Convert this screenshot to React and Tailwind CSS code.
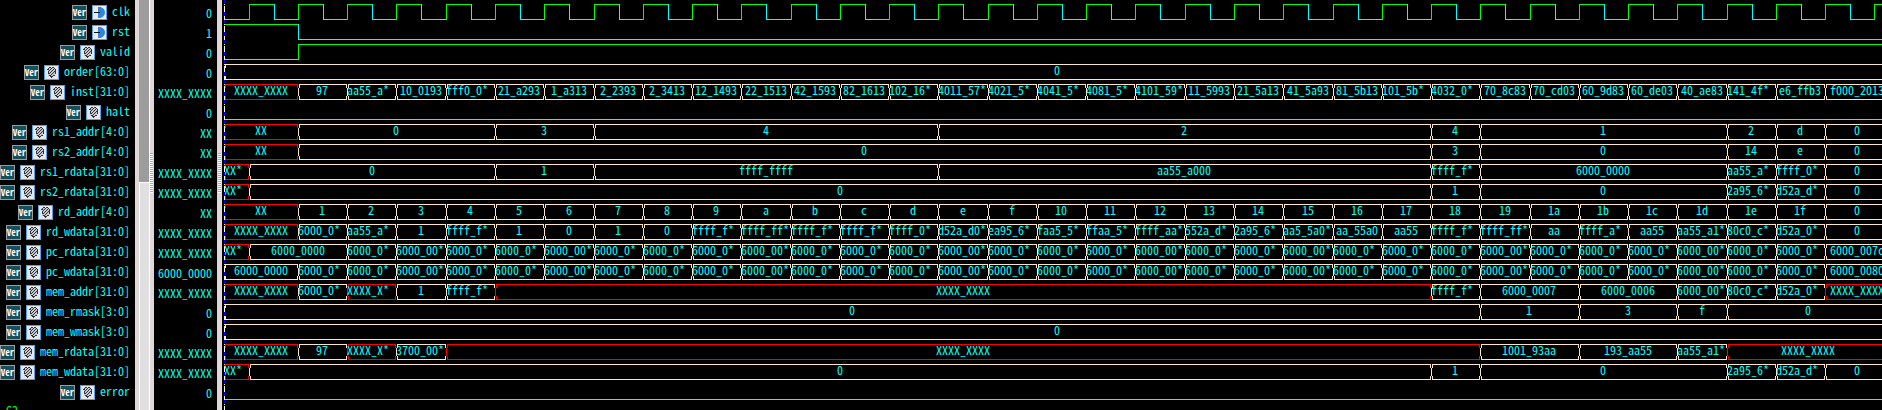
const CYAN = "#00ffff";
const GREEN = "#00ff00";
const RED = "#ff0000";
const CREAM = "#ffe4c4";

const ORIGIN = 225;
const START = 224;
const HALF = 249;
const END = 1890;
const B = [
  298, 347, 396, 446, 495, 544, 594, 643, 692, 741, 791, 840, 889, 938, 988, 1037,
  1086, 1135, 1185, 1234, 1283, 1333, 1382, 1431, 1480, 1530, 1579, 1628, 1677, 1727, 1776, 1825,
];

const each = (texts, from = 0) => texts.map((t, i) => [B[from + i], t]);
const pc = (from) =>
  B.slice(from, 31).map((b, i) => [b, B[from + i + 1] - b >= 50 ? "6000_00*" : "6000_0*"]);

const INST = "97 aa55_a* 10_0193 fff0_0* 21_a293 1_a313 2_2393 2_3413 12_1493 22_1513 42_1593 82_1613 102_16* 4011_57* 4021_5* 4041_5* 4081_5* 4101_59* 11_5993 21_5a13 41_5a93 81_5b13 101_5b* 4032_0* 70_8c83 70_cd03 60_9d83 60_de03 40_ae83 141_4f* e6_ffb3 f000_2013".split(" ");
const RD_ADDR = "1 2 3 4 5 6 7 8 9 a b c d e f 10 11 12 13 14 15 16 17 18 19 1a 1b 1c 1d 1e 1f 0".split(" ");
const RD_WDATA = "6000_0* aa55_a* 1 ffff_f* 1 0 1 0 ffff_f* ffff_ff* ffff_f* ffff_f* ffff_0* d52a_d0* ea95_6* faa5_5* ffaa_5* ffff_aa* 552a_d* 2a95_6* aa5_5a0* aa_55a0 aa55 ffff_f* ffff_ff* aa ffff_a* aa55 aa55_a1* 80c0_c* d52a_0* 0".split(" ");
const X = "XXXX_XXXX";

const SIGNALS = [
  { name: "clk", value: "0", input: true, clock: true },
  { name: "rst", value: "1", input: true, levels: [[START, 1], [B[0], 0]] },
  { name: "valid", value: "0", levels: [[START, 0], [B[0], 1]] },
  { name: "order[63:0]", value: "0", bus: [[START, "0"]] },
  { name: "inst[31:0]", value: X, bus: [[START, X], ...each(INST)] },
  { name: "halt", value: "0", levels: [[START, 0]] },
  { name: "rs1_addr[4:0]", value: "XX", bus: [[START, "XX"], [B[0], "0"], [B[4], "3"], [B[6], "4"], [B[13], "2"], [B[23], "4"], [B[24], "1"], [B[29], "2"], [B[30], "d"], [B[31], "0"]] },
  { name: "rs2_addr[4:0]", value: "XX", bus: [[START, "XX"], [B[0], "0"], [B[23], "3"], [B[24], "0"], [B[29], "14"], [B[30], "e"], [B[31], "0"]] },
  { name: "rs1_rdata[31:0]", value: X, bus: [[START, "XX*"], [HALF, "0"], [B[4], "1"], [B[6], "ffff_ffff"], [B[13], "aa55_a000"], [B[23], "ffff_f*"], [B[24], "6000_0000"], [B[29], "aa55_a*"], [B[30], "ffff_0*"], [B[31], "0"]] },
  { name: "rs2_rdata[31:0]", value: X, bus: [[START, "XX*"], [HALF, "0"], [B[23], "1"], [B[24], "0"], [B[29], "2a95_6*"], [B[30], "d52a_d*"], [B[31], "0"]] },
  { name: "rd_addr[4:0]", value: "XX", bus: [[START, "XX"], ...each(RD_ADDR)] },
  { name: "rd_wdata[31:0]", value: X, bus: [[START, X], ...each(RD_WDATA)] },
  { name: "pc_rdata[31:0]", value: X, bus: [[START, "XX*"], [HALF, "6000_0000"], ...pc(1), [B[31], "6000_007c"]] },
  { name: "pc_wdata[31:0]", value: "6000_0000", bus: [[START, "6000_0000"], ...pc(0), [B[31], "6000_0080"]] },
  { name: "mem_addr[31:0]", value: X, bus: [[START, X], ...each(["6000_0*", "XXXX_X*", "1", "ffff_f*", X]), [B[23], "ffff_f*"], [B[24], "6000_0007"], [B[26], "6000_0006"], [B[28], "6000_00*"], [B[29], "80c0_c*"], [B[30], "d52a_0*"], [B[31], X]] },
  { name: "mem_rmask[3:0]", value: "0", bus: [[START, "0"], [B[24], "1"], [B[26], "3"], [B[28], "f"], [B[29], "0"]] },
  { name: "mem_wmask[3:0]", value: "0", bus: [[START, "0"]] },
  { name: "mem_rdata[31:0]", value: X, bus: [[START, X], ...each(["97", "XXXX_X*", "3700_00*", X]), [B[24], "1001_93aa"], [B[26], "193_aa55"], [B[28], "aa55_a1*"], [B[29], X]] },
  { name: "mem_wdata[31:0]", value: X, bus: [[START, "XX*"], [HALF, "0"], [B[23], "1"], [B[24], "0"], [B[29], "2a95_6*"], [B[30], "d52a_d*"], [B[31], "0"]] },
  { name: "error", value: "0", levels: [[START, 0]] },
];

const clockLevels = () => {
  const rises = [HALF, ...B, 1874];
  const out = [[START, 0]];
  rises.forEach((r, i) => {
    out.push([r, 1]);
    out.push([Math.ceil((r + (rises[i + 1] ?? r + 49)) / 2), 0]);
  });
  return out;
};

function Levels({ levels }) {
  return levels.map(([x, level], i) => {
    const from = x - ORIGIN;
    const to = (levels[i + 1]?.[0] ?? END) - ORIGIN;
    const color = level ? GREEN : CYAN;
    return (
      <g key={x} fill={color}>
        {i > 0 && <rect x={from} y={4} width={1} height={16} />}
        <rect x={from} y={level ? 4 : 19} width={to - from + (level ? 0 : 1)} height={1} />
      </g>
    );
  });
}

function Bus({ cells }) {
  return cells.map(([x, text], i) => {
    const from = x - ORIGIN;
    const to = (cells[i + 1]?.[0] ?? END) - ORIGIN;
    const clipped = text.endsWith("*");
    return (
      <g key={x}>
        <path
          d={`M${from + 1} 4H${to}v4h-1v-3H${from + 2}v3h-1zM${from + 1} 20H${to}v-4h-1v3H${from + 2}v-3h-1zM${from} 8h1v8h-1z`}
          fill={text.startsWith("X") ? RED : CREAM}
        />
        <text
          x={clipped ? from : Math.floor((from + to) / 2)}
          y={15}
          textAnchor={clipped ? "start" : "middle"}
          fill={CYAN}
        >
          {text}
        </text>
      </g>
    );
  });
}

function Waveform({ signal }) {
  return (
    <svg className="block h-5 w-full" shapeRendering="crispEdges" role="img" aria-label={signal.name}>
      {signal.bus ? <Bus cells={signal.bus} /> : <Levels levels={signal.clock ? clockLevels() : signal.levels} />}
    </svg>
  );
}

function LanguageBadge() {
  return (
    <span className="flex h-[15px] w-[15px] shrink-0 items-center justify-center border border-[#9c9c9c] bg-[#17505c] text-[9px] leading-3 font-bold text-white">
      Ver
    </span>
  );
}

function InputIcon() {
  return (
    <svg className="h-[15px] w-[15px] shrink-0" viewBox="0 0 15 15" aria-hidden="true">
      <rect width="15" height="15" fill="#5aa0e6" />
      <rect x="1" y="1" width="13" height="13" fill="#e9edf3" />
      <path d="M6 2h2.500c3 1 4.500 3 4.500 5.500s-1.500 4.500-4.500 5.500H6z" fill="#2f86d8" />
      <path d="M2 7h6v1H2z" fill="#101010" />
    </svg>
  );
}

function RegisterIcon() {
  return (
    <svg className="h-[15px] w-[15px] shrink-0" viewBox="0 0 15 15" shapeRendering="crispEdges" aria-hidden="true">
      <rect width="15" height="15" fill="#5aa0e6" />
      <rect x="1" y="1" width="13" height="13" fill="#e4e7ec" />
      <path d="M4 3h7v8H4z" fill="#c6c9ce" />
      <path
        d="M5 2h2v1H5zM8 2h2v1H8zM4 3h1v2H4zM10 3h1v1h-1zM9 4h1v1H9zM8 5h1v1H8zM7 6h1v1H7zM6 7h1v1H6zM5 8h1v1H5zM7 3h1v1H7zM6 4h1v1H6zM5 5h1v1H5zM4 6h1v3H4zM10 6h1v1h-1zM9 7h1v1H9zM8 8h1v1H8zM7 9h1v1H7zM11 4h1v5h-1zM3 4h1v1H3zM5 10h2v1H5zM9 10h2v1H9zM6 11h3v1H6zM7 12h1v1H7z"
        fill="#303338"
      />
    </svg>
  );
}

function Grip() {
  return <div className="h-10 bg-[repeating-linear-gradient(#a8a8a8_0_1px,#ffffff_1px_2px)]" />;
}

export default function App() {
  return (
    <main className="flex h-screen w-full overflow-hidden bg-black font-['Noto_Sans_Mono_CJK_SC','DejaVu_Sans_Mono',monospace] text-[12px] leading-5 text-[#00ffff]">
      <section className="flex w-[135px] shrink-0 flex-col">
        {SIGNALS.map((s) => (
          <div key={s.name} className="flex h-5 shrink-0 items-end justify-end gap-[5px] pr-[5px]">
            <LanguageBadge />
            {s.input ? <InputIcon /> : <RegisterIcon />}
            <span className="h-5 leading-[22px]">{s.name}</span>
          </div>
        ))}
        <div className="h-5 shrink-0 pl-1.5 text-[#00ff00]">G2</div>
      </section>

      <div className="flex w-3.5 shrink-0 flex-col bg-[#e0d8d8] pl-1">
        <div className="h-[182px] shrink-0 bg-[#9c9c9c]" />
        <div className="grow border-t border-l border-white bg-[#e0e0e0]" />
      </div>
      <div className="w-[5px] shrink-0 border-l border-white bg-[#e0d8d8] pt-[153px] pr-px">
        <Grip />
      </div>

      <section className="w-[63px] shrink-0 pr-[5px] text-right">
        {SIGNALS.map((s) => (
          <div key={s.name} className="h-5 leading-[26px]">{s.value}</div>
        ))}
      </section>

      <div className="w-[5px] shrink-0 bg-[#e0d8d8] px-px pt-[153px]">
        <Grip />
      </div>
      <div className="ml-0.5 w-px shrink-0 bg-[repeating-linear-gradient(#0000ff_0_3px,#000_3px_4px,#ffff00_4px_5px,#000_5px_6px,#fff_6px_12px,#0000ff_12px_16px,#fff_16px_20px)]" />

      <section className="min-w-0 grow">
        {SIGNALS.map((s) => (
          <Waveform key={s.name} signal={s} />
        ))}
      </section>
    </main>
  );
}
